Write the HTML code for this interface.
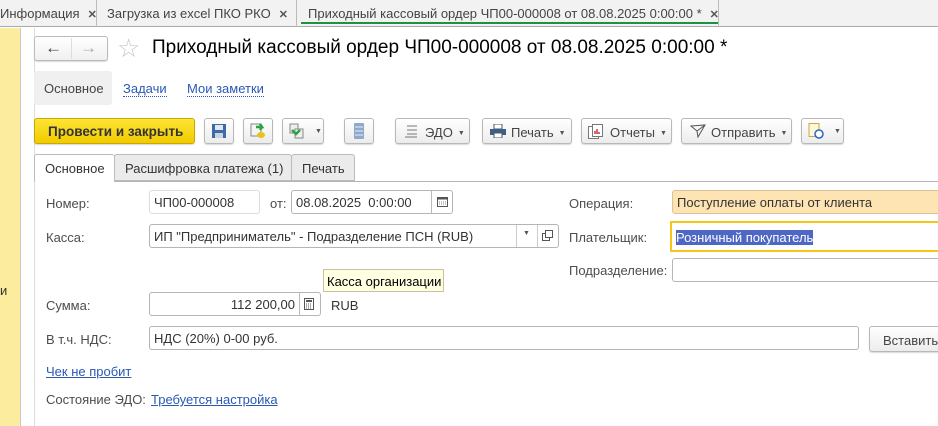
<!DOCTYPE html>
<html><head><meta charset="utf-8"><style>
*{box-sizing:border-box;margin:0;padding:0}
body{width:938px;height:426px;overflow:hidden;background:#fff;font-family:"Liberation Sans",Arial,sans-serif;font-size:13px;color:#4d4d4d;position:relative}
.a{position:absolute;white-space:nowrap}
.fld{position:absolute;border:1px solid #b5b5b5;border-radius:3px;background:#fff;height:24px;padding:4px 4px;color:#333;white-space:nowrap;overflow:hidden}
.btn{position:absolute;height:26px;border:1px solid #b8b8b8;border-radius:3px;background:linear-gradient(#fff,#ececec);box-shadow:0 1px 1px rgba(0,0,0,.15);color:#444;padding:6px 8px;white-space:nowrap}
.lnk{color:#2a58b5;text-decoration:underline}
.dl{color:#2a58b5;border-bottom:1px dotted #2a58b5}
.tab{position:absolute;top:0;height:27px;border-right:1px solid #bbb;padding:6px 0 0 0;color:#444;white-space:nowrap;overflow:hidden;font-size:13px}
.x{color:#555;font-weight:bold;margin-left:8px;font-size:11px}
.arr{font-size:7px;color:#555;margin-left:5px;vertical-align:2px}
</style></head><body>
<div class="a" style="left:0;top:0;width:938px;height:27px;background:#f2f2f2;border-bottom:1px solid #aaa"></div>
<div class="tab" style="left:0;width:97px">Информация<span class="x">✕</span></div>
<div class="tab" style="left:97px;width:200px;padding-left:10px">Загрузка из excel ПКО РКО<span class="x">✕</span></div>
<div class="tab" style="left:297px;width:422px;padding-left:11px">Приходный кассовый ордер ЧП00-000008 от 08.08.2025 0:00:00 *<span class="x">✕</span></div>
<div class="a" style="left:301px;top:22px;width:417px;height:2px;background:#1a9440"></div>
<div class="a" style="left:0;top:28px;width:21px;height:398px;background:#fcec9e;border-right:1px solid #c8c8c8"></div>
<div class="a" style="left:0;top:283px;font-size:13px;color:#333">и</div>
<div class="a" style="left:34px;top:28px;width:1px;height:398px;background:#ddd"></div>
<div class="a" style="left:34px;top:36px;width:74px;height:25px;border:1px solid #bbb;border-radius:3px;background:linear-gradient(#fff,#f0f0f0);box-shadow:0 1px 1px rgba(0,0,0,.15)"></div>
<div class="a" style="left:71px;top:38px;width:1px;height:21px;background:#ddd"></div>
<div class="a" style="left:45px;top:38px;font-size:17px;color:#444;font-weight:bold">←</div>
<div class="a" style="left:80px;top:38px;font-size:17px;color:#aaa;font-weight:bold">→</div>
<div class="a" style="left:117px;top:33px;font-size:26px;color:#c8c8c8">☆</div>
<div class="a" style="left:152px;top:37px;font-size:19px;color:#000">Приходный кассовый ордер ЧП00-000008 от 08.08.2025 0:00:00 *</div>
<div class="a" style="left:34px;top:71px;width:78px;height:34px;background:#f0f0f0;border-radius:3px"></div>
<div class="a" style="left:44px;top:81px;color:#444">Основное</div>
<div class="a dl" style="left:123px;top:81px">Задачи</div>
<div class="a dl" style="left:187px;top:81px">Мои заметки</div>
<div class="btn" style="left:34px;top:118px;width:161px;background:linear-gradient(#fde434,#f2cc00);border-color:#c9a800;color:#333;font-weight:bold;padding-left:13px;font-size:13.5px;padding-top:5px">Провести и закрыть</div>
<div class="btn" style="left:204px;top:118px;width:30px"><svg width="14" height="14" style="position:absolute;left:7px;top:5px"><rect x="0" y="0" width="14" height="14" fill="#3f6aa8"/><rect x="3" y="1" width="8" height="5" fill="#dfe8f5"/><rect x="3" y="9" width="8" height="5" fill="#c9d4e3"/></svg></div>
<div class="btn" style="left:243px;top:118px;width:30px"><svg width="16" height="16" style="position:absolute;left:6px;top:4px"><rect x="1" y="1" width="10" height="12" fill="#f4f4f4" stroke="#888"/><path d="M6 4h6l-2-3M12 4l-2 3" stroke="#2aa345" stroke-width="2.5" fill="none"/><ellipse cx="11" cy="12" rx="4" ry="3" fill="#e9c21c"/></svg></div>
<div class="btn" style="left:282px;top:118px;width:42px"><svg width="16" height="16" style="position:absolute;left:6px;top:4px"><rect x="1" y="1" width="8" height="9" fill="#eee" stroke="#888"/><rect x="6" y="6" width="8" height="9" fill="#eee" stroke="#888"/><path d="M3 7l4 4 4-4" stroke="#2aa345" stroke-width="2.5" fill="none"/></svg><span class="arr" style="position:absolute;left:27px;top:9px">▼</span></div>
<div class="btn" style="left:344px;top:118px;width:30px"><svg width="10" height="16" style="position:absolute;left:9px;top:4px"><rect x="0" y="0" width="10" height="16" rx="1" fill="#8ea9c9"/><path d="M1 4h8M1 8h8M1 12h8" stroke="#e8eef6"/></svg></div>
<div class="btn" style="left:395px;top:118px;width:75px;padding-left:29px">ЭДО<span class="arr">▼</span><svg width="14" height="14" style="position:absolute;left:8px;top:5px"><path d="M3 2h10M3 6h10M3 10h10M1 13h12" stroke="#777" fill="none"/></svg></div>
<div class="btn" style="left:482px;top:118px;width:90px;padding-left:28px">Печать<span class="arr">▼</span><svg width="16" height="14" style="position:absolute;left:7px;top:5px"><rect x="4" y="0" width="8" height="5" fill="#fff" stroke="#555"/><rect x="0" y="5" width="16" height="6" fill="#3b5e8c"/><rect x="4" y="9" width="8" height="5" fill="#fff" stroke="#555"/></svg></div>
<div class="btn" style="left:581px;top:118px;width:91px;padding-left:28px">Отчеты<span class="arr">▼</span><svg width="16" height="15" style="position:absolute;left:6px;top:5px"><rect x="0.5" y="2.5" width="10" height="12" fill="#fff" stroke="#777"/><rect x="4.5" y="0.5" width="10" height="12" fill="#fff" stroke="#777"/><path d="M7 10V7M9 10V5M11 10V8" stroke="#c33" stroke-width="1.5"/></svg></div>
<div class="btn" style="left:681px;top:118px;width:111px;padding-left:29px">Отправить<span class="arr">▼</span><svg width="16" height="14" style="position:absolute;left:8px;top:5px"><path d="M1 2L15 1 8 13 7 7z M7 7L15 1" stroke="#555" fill="none"/></svg></div>
<div class="btn" style="left:801px;top:118px;width:43px"><svg width="16" height="16" style="position:absolute;left:6px;top:4px"><rect x="1" y="0.5" width="10" height="13" fill="#fff6d5" stroke="#c9a84a"/><circle cx="11" cy="11" r="4" fill="#fff" stroke="#2b62c9" stroke-width="1.5"/></svg><span class="arr" style="position:absolute;left:27px;top:9px">▼</span></div>
<div class="a" style="left:34px;top:181px;width:904px;height:1px;background:#b5b5b5"></div>
<div class="a" style="left:34px;top:154px;width:81px;height:28px;background:#fff;border:1px solid #bbb;border-bottom:none;border-radius:3px 3px 0 0;padding:6px 0 0 10px;color:#333;font-size:13px">Основное</div>
<div class="a" style="left:114px;top:154px;width:178px;height:27px;background:#ebebeb;border:1px solid #bbb;border-radius:3px 3px 0 0;padding:6px 0 0 10px;color:#333;font-size:13px">Расшифровка платежа (1)</div>
<div class="a" style="left:291px;top:154px;width:64px;height:27px;background:#ebebeb;border:1px solid #bbb;border-radius:3px 3px 0 0;padding:6px 0 0 10px;color:#333;font-size:13px">Печать</div>
<div class="a" style="left:46px;top:196px">Номер:</div>
<div class="fld" style="left:149px;top:190px;width:111px;border-color:#ddd">ЧП00-000008</div>
<div class="a" style="left:270px;top:196px">от:</div>
<div class="fld" style="left:291px;top:190px;width:162px">08.08.2025&nbsp; 0:00:00</div>
<div class="a" style="left:431px;top:191px;width:1px;height:22px;background:#bbb"></div>
<svg class="a" style="left:437px;top:196px" width="11" height="11"><rect x="0.5" y="1.5" width="10" height="9" fill="#fff" stroke="#555"/><rect x="0.5" y="1.5" width="10" height="2" fill="#555"/><path d="M2 6h7M2 8h7" stroke="#888" stroke-dasharray="1 1"/></svg>
<div class="a" style="left:46px;top:230px">Касса:</div>
<div class="fld" style="left:149px;top:224px;width:410px">ИП "Предприниматель" - Подразделение ПСН (RUB)</div>
<div class="a" style="left:516px;top:225px;width:1px;height:22px;background:#ccc"></div>
<div class="a" style="left:537px;top:225px;width:1px;height:22px;background:#ccc"></div>
<div class="a" style="left:523px;top:230px;font-size:7px;color:#555">▼</div>
<svg class="a" style="left:542px;top:230px" width="11" height="11"><rect x="0.5" y="3.5" width="7" height="7" fill="#fff" stroke="#555"/><rect x="3.5" y="0.5" width="7" height="7" fill="#fff" stroke="#555"/></svg>
<div class="a" style="left:323px;top:269px;width:121px;height:23px;background:#ffffe1;border:1px solid #c9c29a;padding:4px 0 0 3px;color:#000">Касса организации</div>
<div class="a" style="left:46px;top:298px">Сумма:</div>
<div class="fld" style="left:149px;top:292px;width:172px;text-align:right;padding-right:25px">112 200,00</div>
<div class="a" style="left:299px;top:293px;width:1px;height:22px;background:#bbb"></div>
<svg class="a" style="left:304px;top:298px" width="11" height="12"><rect x="0.5" y="0.5" width="9" height="11" fill="#fff" stroke="#555"/><rect x="2" y="2" width="6" height="2" fill="#555"/><path d="M2 6h6M2 8h6M2 10h6" stroke="#555" stroke-dasharray="1 1"/></svg>
<div class="a" style="left:331px;top:298px;color:#333">RUB</div>
<div class="a" style="left:46px;top:332px">В т.ч. НДС:</div>
<div class="fld" style="left:149px;top:326px;width:710px">НДС (20%) 0-00 руб.</div>
<div class="btn" style="left:869px;top:326px;width:80px;padding-left:13px">Вставить</div>
<div class="a lnk" style="left:46px;top:364px">Чек не пробит</div>
<div class="a" style="left:46px;top:392px">Состояние ЭДО:</div>
<div class="a lnk" style="left:151px;top:392px">Требуется настройка</div>
<div class="a" style="left:569px;top:196px">Операция:</div>
<div class="fld" style="left:672px;top:190px;width:280px;background:#fde4b2;border-color:#d9c49a">Поступление оплаты от клиента</div>
<div class="a" style="left:569px;top:230px">Плательщик:</div>
<div class="fld" style="left:670px;top:221px;width:280px;height:31px;border:2px solid #f5c518;border-radius:1px;padding:7px 4px"><span style="background:#4e67c4;color:#fff">Розничный покупатель</span></div>
<div class="a" style="left:569px;top:263px">Подразделение:</div>
<div class="fld" style="left:672px;top:258px;width:280px"></div>
</body></html>
